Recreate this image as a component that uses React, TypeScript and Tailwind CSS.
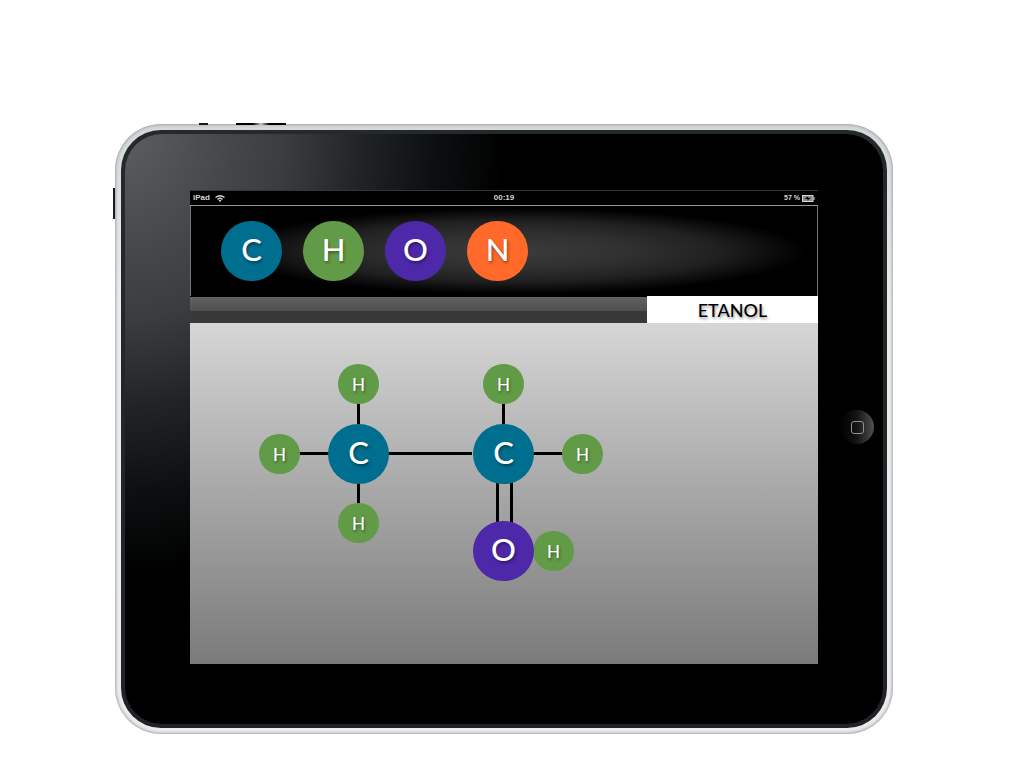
type ElementSymbol = "C" | "H" | "O" | "N";

const fills: Record<ElementSymbol, string> = {
  C: "bg-[#006e8f]",
  H: "bg-[#629b47]",
  O: "bg-[#4d28a9]",
  N: "bg-[#ff692a]",
};

const names: Record<ElementSymbol, string> = {
  C: "Carbono",
  H: "Hidrogênio",
  O: "Oxigênio",
  N: "Nitrogênio",
};

const palette: ElementSymbol[] = ["C", "H", "O", "N"];

const bonds = [
  "left-[167px] top-[80px] h-[21px] w-[3px]",
  "left-[167px] top-[160px] h-[21px] w-[3px]",
  "left-[109px] top-[129px] h-[3px] w-[30px]",
  "left-[198px] top-[129px] h-[3px] w-[84px]",
  "left-[312px] top-[80px] h-[21px] w-[3px]",
  "left-[343px] top-[129px] h-[3px] w-[30px]",
  "left-[306px] top-[158px] h-[42px] w-[3px]",
  "left-[320px] top-[158px] h-[42px] w-[3px]",
];

const atoms: { symbol: ElementSymbol; small?: boolean; place: string }[] = [
  { symbol: "H", small: true, place: "left-[148px] top-[41px]" },
  { symbol: "H", small: true, place: "left-[69px] top-[111px]" },
  { symbol: "H", small: true, place: "left-[148px] top-[180px]" },
  { symbol: "C", place: "left-[138px] top-[101px]" },
  { symbol: "H", small: true, place: "left-[293px] top-[41px]" },
  { symbol: "H", small: true, place: "left-[372px] top-[111px]" },
  { symbol: "H", small: true, place: "left-[343px] top-[208px]" },
  { symbol: "C", place: "left-[283px] top-[101px]" },
  { symbol: "O", place: "left-[283px] top-[198px]" },
];

const letter = "flex items-center justify-center rounded-full font-['Lato',sans-serif] font-medium text-white [text-shadow:1px_2px_3px_rgba(0,0,0,0.4)]";
const large = "h-[60px] w-[61px] pb-[4px] text-[31px] leading-[56px]";
const small = "h-[40px] w-[41px] pt-px text-[17px] leading-[39px]";

function WifiIcon() {
  return (
    <svg viewBox="0 0 20 14" className="h-[7px] w-[10px]" fill="none" stroke="#d4d4d4" aria-hidden="true">
      <path d="M1 5 Q10 -2 19 5" strokeWidth="2.6" />
      <path d="M5 9 Q10 4 15 9" strokeWidth="2.4" />
      <path d="M7 10.5 Q10 8.5 13 10.5 L10 14 Z" fill="#d4d4d4" stroke="none" />
    </svg>
  );
}

function BatteryIcon() {
  return (
    <svg viewBox="0 0 26 14" className="h-[7px] w-[13px]" aria-hidden="true">
      <rect x="1" y="1" width="21" height="12" fill="#8c8c8c" stroke="#d4d4d4" strokeWidth="2" />
      <path d="M23 4 H25 V10 H23 Z" fill="#d4d4d4" />
      <path d="M5 7 L12 3 V6 L18 5 L11 11 V8 Z" fill="#000000" />
    </svg>
  );
}

function StatusBar() {
  return (
    <div className="grid h-[14px] grid-cols-3 items-center bg-black px-[3px] font-['Liberation_Sans',sans-serif] text-[8px] leading-[14px] font-bold text-[#d4d4d4]">
      <div className="flex items-center gap-[5px]">
        <span>iPad</span>
        <WifiIcon />
      </div>
      <span className="text-center">00:19</span>
      <div className="flex items-center justify-end gap-[2px]">
        <span className="text-[7px]">57 %</span>
        <BatteryIcon />
      </div>
    </div>
  );
}

function Palette() {
  return (
    <header className="flex h-[90px] items-center gap-[21px] border-x border-[#777777] bg-black bg-[radial-gradient(ellipse_290px_43px_at_52%_50%,#3b3b3b_0%,#303030_40%,#202020_70%,#000000_100%)] px-[30px]">
      {palette.map((symbol) => (
        <button key={symbol} type="button" aria-label={names[symbol]} className={`${letter} ${large} ${fills[symbol]}`}>
          {symbol}
        </button>
      ))}
    </header>
  );
}

function Molecule() {
  return (
    <main className="relative h-[341px] bg-linear-to-b from-[#d6d6d6] to-[#7b7b7b]">
      {bonds.map((place) => (
        <div key={place} className={`absolute bg-black ${place}`} />
      ))}
      {atoms.map(({ symbol, small: isSmall, place }) => (
        <div key={place} className={`absolute ${letter} ${isSmall ? small : large} ${fills[symbol]} ${place}`}>
          {symbol}
        </div>
      ))}
    </main>
  );
}

export default function App() {
  return (
    <div className="min-h-screen bg-white pt-[124px] pr-[131px] pb-[34px] pl-[115px]">
      <div className="relative rounded-[46px] bg-linear-to-b from-[#d4d8d8] via-[#eceeee] via-30% to-[#ececee] p-[6px] shadow-[inset_0_0_3px_1px_#a2a5a7]">
        <span className="absolute top-[64px] -left-[2px] h-[31px] w-[2px] bg-[#181a1b]" />
        <span className="absolute -top-px left-[84px] h-[2px] w-[9px] bg-[#181a1b]" />
        <span className="absolute -top-px left-[121px] h-[2px] w-[50px] bg-linear-to-r from-black from-30% via-[#cccccc] to-black to-70%" />
        <div className="rounded-[40px] bg-linear-to-b from-[#242a2c] to-[#202226] p-[4px]">
          <div className="flex items-center rounded-[37px] bg-black bg-[radial-gradient(ellipse_380px_440px_at_0_0,#5c5d5e_0%,#454647_28%,#3b3c3e_42%,#212427_62%,#0c0f10_82%,#000000_100%)] pt-[56px] pb-[60px] pl-[65px]">
            <div className="min-w-0 flex-1 border-t border-[#33363a]">
              <StatusBar />
              <div className="border-t border-[#999999]">
                <Palette />
                <div className="flex items-end bg-black">
                  <div className="h-[26px] flex-1 bg-[linear-gradient(to_bottom,#626262_0,#4f4f4f_14px,#383838_14px,#383838_100%)]" />
                  <h1 className="h-[27px] w-[171px] bg-white text-center font-['Lato',sans-serif] text-[18px] leading-[29px] font-medium text-black [text-shadow:1px_2px_3px_rgba(0,0,0,0.4)]">
                    ETANOL
                  </h1>
                </div>
              </div>
              <Molecule />
            </div>
            <div className="flex w-[65px] shrink-0 justify-end pr-[9px]">
              <button
                type="button"
                aria-label="Início"
                className="flex size-[34px] items-center justify-center rounded-full bg-linear-to-r from-[#020202] via-[#151515] to-[#505254]"
              >
                <span className="size-[13px] rounded-[3px] border border-[#929292]" />
              </button>
            </div>
          </div>
        </div>
      </div>
    </div>
  );
}
